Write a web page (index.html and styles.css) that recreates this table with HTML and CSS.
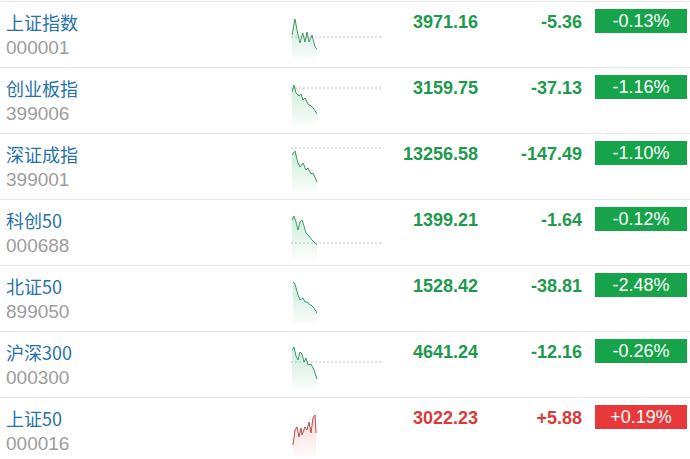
FILE: index.html
```html
<!DOCTYPE html>
<html lang="zh">
<head>
<meta charset="utf-8">
<link rel="stylesheet" href="styles.css">
</head>
<body>
<svg width="0" height="0" class="defs">
  <defs>
    <linearGradient id="gfill" x1="0" y1="0" x2="0" y2="1">
      <stop offset="0" stop-color="#2bb36a" stop-opacity="0.25"/>
      <stop offset="1" stop-color="#2bb36a" stop-opacity="0.02"/>
    </linearGradient>
    <linearGradient id="rfill" x1="0" y1="0" x2="0" y2="1">
      <stop offset="0" stop-color="#f06060" stop-opacity="0.25"/>
      <stop offset="1" stop-color="#f06060" stop-opacity="0.03"/>
    </linearGradient>
  </defs>
</svg>
<div class="list">
  <div class="row">
    <div class="name"><div class="title">上证指数</div><div class="code">000001</div></div>
    <svg class="spark" viewBox="0 0 92 65" width="92" height="65">
      <line class="base" x1="0" y1="35" x2="92" y2="35"/>
      <path class="gf" d="M1 33 L4 17 L7 33 L9 41 L11.7 31 L14 40 L16 30 L18 40 L21 33 L24 45 L26 47 L26 58 L1 58 Z"/>
      <polyline class="gl" points="1,33 4,17 7,33 9,41 11.7,31 14,40 16,30 18,40 21,33 24,45 26,47"/>
    </svg>
    <div class="price down">3971.16</div>
    <div class="chg down">-5.36</div>
    <div class="badge bdown">-0.13%</div>
  </div>
  <div class="row">
    <div class="name"><div class="title">创业板指</div><div class="code">399006</div></div>
    <svg class="spark" viewBox="0 0 92 65" width="92" height="65">
      <line class="base" x1="0" y1="20" x2="92" y2="20"/>
      <path class="gf" d="M1 24 L3 17 L5 25 L8 28 L10 26 L12 32 L14 30 L17 36 L20 38 L23 41 L26 46 L26 58 L1 58 Z"/>
      <polyline class="gl" points="1,24 3,17 5,25 8,28 10,26 12,32 14,30 17,36 20,38 23,41 26,46"/>
    </svg>
    <div class="price down">3159.75</div>
    <div class="chg down">-37.13</div>
    <div class="badge bdown">-1.16%</div>
  </div>
  <div class="row">
    <div class="name"><div class="title">深证成指</div><div class="code">399001</div></div>
    <svg class="spark" viewBox="0 0 92 65" width="92" height="65">
      <line class="base" x1="0" y1="14" x2="92" y2="14"/>
      <path class="gf" d="M1 21 L4 17 L7 29 L9 33 L12 29 L15 36 L17 34 L20 40 L22 39 L26 48 L26 58 L1 58 Z"/>
      <polyline class="gl" points="1,21 4,17 7,29 9,33 12,29 15,36 17,34 20,40 22,39 26,48"/>
    </svg>
    <div class="price down">13256.58</div>
    <div class="chg down">-147.49</div>
    <div class="badge bdown">-1.10%</div>
  </div>
  <div class="row">
    <div class="name"><div class="title">科创50</div><div class="code">000688</div></div>
    <svg class="spark" viewBox="0 0 92 65" width="92" height="65">
      <line class="base" x1="0" y1="43" x2="92" y2="43"/>
      <path class="gf" d="M1 20 L3 16 L5 22 L7 30 L9 22 L11 20 L13 26 L15 33 L18 36 L21 40 L26 45 L26 58 L1 58 Z"/>
      <polyline class="gl" points="1,20 3,16 5,22 7,30 9,22 11,20 13,26 15,33 18,36 21,40 26,45"/>
    </svg>
    <div class="price down">1399.21</div>
    <div class="chg down">-1.64</div>
    <div class="badge bdown">-0.12%</div>
  </div>
  <div class="row">
    <div class="name"><div class="title">北证50</div><div class="code">899050</div></div>
    <svg class="spark" viewBox="0 0 92 65" width="92" height="65">
      <path class="gf" d="M2 16 L4 18 L7 29 L9 34 L12 32 L14 36 L16 36 L18 38 L21 40 L23 42 L26 47 L26 58 L2 58 Z"/>
      <polyline class="gl" points="2,16 4,18 7,29 9,34 12,32 14,36 16,36 18,38 21,40 23,42 26,47"/>
    </svg>
    <div class="price down">1528.42</div>
    <div class="chg down">-38.81</div>
    <div class="badge bdown">-2.48%</div>
  </div>
  <div class="row">
    <div class="name"><div class="title">沪深300</div><div class="code">000300</div></div>
    <svg class="spark" viewBox="0 0 92 65" width="92" height="65">
      <line class="base" x1="0" y1="30" x2="92" y2="30"/>
      <path class="gf" d="M1 18 L3 15 L5 24 L7 28 L9 20 L11 22 L13 30 L15 26 L17 33 L20 32 L23 38 L26 47 L26 58 L1 58 Z"/>
      <polyline class="gl" points="1,18 3,15 5,24 7,28 9,20 11,22 13,30 15,26 17,33 20,32 23,38 26,47"/>
    </svg>
    <div class="price down">4641.24</div>
    <div class="chg down">-12.16</div>
    <div class="badge bdown">-0.26%</div>
  </div>
  <div class="row">
    <div class="name"><div class="title">上证50</div><div class="code">000016</div></div>
    <svg class="spark" viewBox="0 0 92 65" width="92" height="65">
      <path class="rf" d="M2 47 L4 32 L6 29 L8 39 L10 30 L11 37 L14 29 L16 32 L18 24 L20 35 L22 20 L24 17 L25 35 L25 58 L2 58 Z"/>
      <polyline class="rl" points="2,47 4,32 6,29 8,39 10,30 11,37 14,29 16,32 18,24 20,35 22,20 24,17 25,35"/>
    </svg>
    <div class="price up">3022.23</div>
    <div class="chg up">+5.88</div>
    <div class="badge bup">+0.19%</div>
  </div>
</div>
</body>
</html>
```
FILE: styles.css
```css
html, body {
  margin: 0;
  padding: 0;
  background: #fff;
}
.defs {
  position: absolute;
  width: 0;
  height: 0;
}
.list {
  padding-top: 1px;
  width: 690px;
}
.row {
  display: grid;
  grid-template-columns: 285px 92px 95px 104px 92px;
  height: 65px;
  border-top: 1px solid #e6e6e6;
  padding-left: 6px;
  align-items: start;
}
.row .badge {
  margin-left: 13px;
}
.name {
  padding-top: 7px;
}
.title {
  font-family: "Noto Sans CJK SC", "Microsoft YaHei", sans-serif;
  font-size: 18px;
  line-height: 26px;
  color: #2572a8;
}
.code {
  font-family: "Liberation Sans", Arial, sans-serif;
  font-size: 19px;
  line-height: 26px;
  color: #9d9d9d;
}
.spark {
  display: block;
}
.base {
  stroke: #c4c4c4;
  stroke-width: 1;
  stroke-dasharray: 2 2;
}
.gl {
  fill: none;
  stroke: #3b9a62;
  stroke-width: 1;
  stroke-linejoin: round;
}
.gf {
  fill: url(#gfill);
}
.rl {
  fill: none;
  stroke: #b0504c;
  stroke-width: 1;
  stroke-linejoin: round;
}
.rf {
  fill: url(#rfill);
}
.price, .chg {
  font-family: "Liberation Sans", Arial, sans-serif;
  font-weight: bold;
  font-size: 18px;
  line-height: 24px;
  margin-top: 8px;
  text-align: right;
}
.down {
  color: #1e9a4c;
}
.up {
  color: #d93a3a;
}
.badge {
  width: 92px;
  height: 24px;
  margin-top: 7px;
  font-family: "Liberation Sans", Arial, sans-serif;
  font-size: 18px;
  line-height: 24px;
  text-align: center;
  color: #fff;
}
.bdown {
  background: #17a34a;
}
.bup {
  background: #e8383a;
}
```
